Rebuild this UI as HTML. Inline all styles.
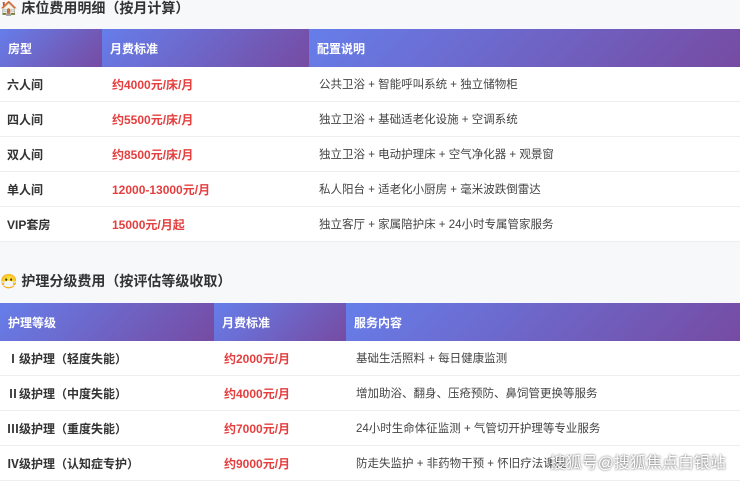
<!DOCTYPE html><html><head><meta charset="utf-8"><style>
body{margin:0;width:740px;height:476px;overflow:hidden;background:#f7f8fa;font-family:"Liberation Sans","Noto Sans CJK SC",sans-serif;font-size:12px;position:relative}
h3{position:absolute;left:0;margin:0;font-size:14px;font-weight:bold;color:#333;}
table{position:absolute;left:0;width:740px;border-collapse:collapse;background:#fff}
th{height:38px;padding:0 0 0 8px;text-align:left;color:#fff;font-weight:bold;background:linear-gradient(135deg,#667eea,#764ba2);font-size:12px}
td{height:34px;padding:0 0 0 10px;border-bottom:1px solid #eee}
td:nth-child(1){font-weight:bold;color:#333;padding-left:7px}
td:nth-child(2){font-weight:bold;color:#e53e3e}
td:nth-child(3){color:#444;font-size:11.5px}
.wm{position:absolute;right:14px;top:449px;color:#fff;font-size:16px;text-shadow:0 0 2px #444}
</style></head><body>
<h3 style="top:-2px">🏠 床位费用明细（按月计算）</h3>
<table style="top:29px"><tr><th style="width:94px">房型</th><th style="width:199px">月费标准</th><th>配置说明</th></tr>
<tr><td>六人间</td><td>约4000元/床/月</td><td>公共卫浴 + 智能呼叫系统 + 独立储物柜</td></tr>
<tr><td>四人间</td><td>约5500元/床/月</td><td>独立卫浴 + 基础适老化设施 + 空调系统</td></tr>
<tr><td>双人间</td><td>约8500元/床/月</td><td>独立卫浴 + 电动护理床 + 空气净化器 + 观景窗</td></tr>
<tr><td>单人间</td><td>12000-13000元/月</td><td>私人阳台 + 适老化小厨房 + 毫米波跌倒雷达</td></tr>
<tr><td>VIP套房</td><td>15000元/月起</td><td>独立客厅 + 家属陪护床 + 24小时专属管家服务</td></tr></table>
<h3 style="top:271px">😷 护理分级费用（按评估等级收取）</h3>
<table style="top:303px"><tr><th style="width:206px">护理等级</th><th style="width:124px">月费标准</th><th>服务内容</th></tr>
<tr><td>Ⅰ级护理（轻度失能）</td><td>约2000元/月</td><td>基础生活照料 + 每日健康监测</td></tr>
<tr><td>Ⅱ级护理（中度失能）</td><td>约4000元/月</td><td>增加助浴、翻身、压疮预防、鼻饲管更换等服务</td></tr>
<tr><td>Ⅲ级护理（重度失能）</td><td>约7000元/月</td><td>24小时生命体征监测 + 气管切开护理等专业服务</td></tr>
<tr><td>Ⅳ级护理（认知症专护）</td><td>约9000元/月</td><td>防走失监护 + 非药物干预 + 怀旧疗法课程</td></tr></table>
<div class="wm">搜狐号@搜狐焦点白银站</div>
</body></html>
